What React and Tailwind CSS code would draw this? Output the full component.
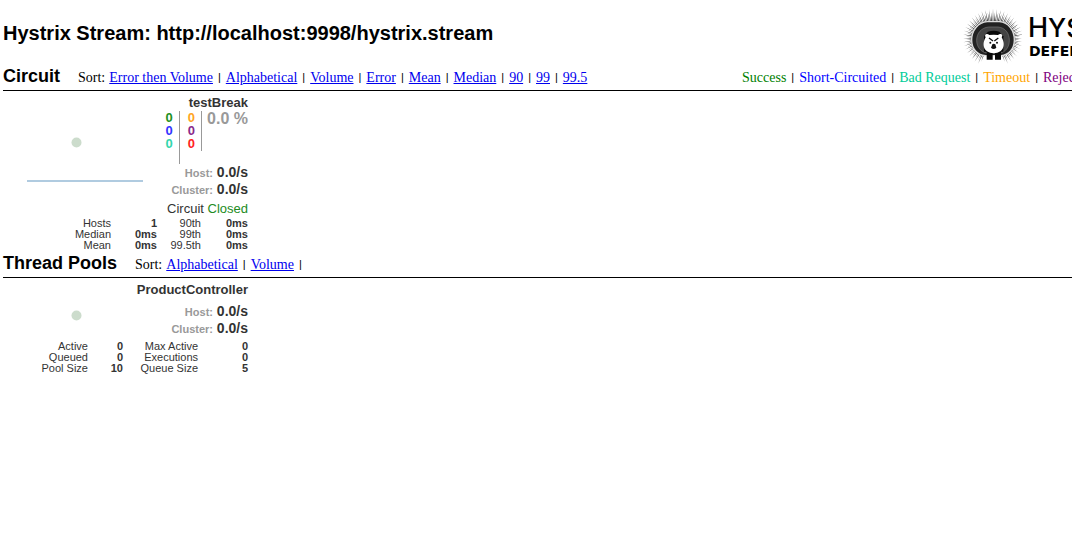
import React from "react";

const SANS = "font-['Liberation_Sans',Arial,sans-serif]";

const RAYS = Array.from({ length: 96 }, (_, i) => {
  const a = (i / 96) * Math.PI * 2;
  const w = 0.024;
  const rx = i % 2 ? 80 : 90;
  const ry = i % 2 ? 78 : 88;
  const p = (angle, x, y) =>
    `${(99 + Math.cos(angle) * x).toFixed(1)},${(100 + Math.sin(angle) * y).toFixed(1)}`;
  return { a, points: `${p(a - w, 58, 48)} ${p(a, rx, ry)} ${p(a + w, 58, 48)}` };
}).filter((r) => !(Math.sin(r.a) > 0.9));

function Logo() {
  return (
    <svg viewBox="0 0 186 180" className="h-[60px] w-[62px] shrink-0" aria-hidden="true">
      {RAYS.map((r) => (
        <polygon key={r.a} points={r.points} fill="#222" />
      ))}
      <path
        d="M82 50H118C146 52 163 77 163 105C163 132 146 150 123 152H77C52 150 35 132 35 105C35 77 54 52 82 50Z"
        fill="#222"
        stroke="#ddd"
        strokeWidth="4"
      />
      <path
        d="M86 66H114C136 68 148 85 148 106C148 127 136 141 121 144H79C64 141 50 127 50 106C50 85 64 68 86 66Z"
        fill="#444"
        stroke="#777"
        strokeWidth="2"
      />
      <path d="M84 80Q101 74 118 80L130 94V140H72V94Z" fill="#080808" />
      <path d="M80 138H98V164H80ZM105 138H123V164H105Z" fill="#080808" />
      <path
        d="M77 97C71 88 81 84 88 90Q101 88 114 90C121 84 131 88 125 97C134 112 134 130 121 139C110 147 92 147 81 139C68 130 68 112 77 97Z"
        fill="#fff"
      />
      <path d="M87 99L99 108M115 99L103 108" stroke="#111" strokeWidth="4" />
      <circle cx="91" cy="113" r="3" fill="#111" />
      <circle cx="111" cy="113" r="3" fill="#111" />
      <path d="M97 118Q101 115 106 118L109 128Q101 136 93 128Z" fill="#111" />
    </svg>
  );
}

function SortLinks({ items, trailing }) {
  return (
    <nav aria-label="Sort" className="flex gap-1 whitespace-nowrap font-['Liberation_Serif',serif] text-[14px] leading-4">
      <span>Sort:</span>
      {items.map((item, i) => (
        <React.Fragment key={item}>
          <a href="#" className="text-[#0000ee] underline">{item}</a>
          {(trailing || i < items.length - 1) && <Bar />}
        </React.Fragment>
      ))}
    </nav>
  );
}

function Bar() {
  return <span className="px-px font-['Liberation_Sans',sans-serif] text-[11px] leading-[15px]">|</span>;
}

function Legend() {
  const items = [
    ["Success", "text-[#008000]"],
    ["Short-Circuited", "text-[#0000ff]"],
    ["Bad Request", "text-[#00cc99]"],
    ["Timeout", "text-[#ffa500]"],
    ["Rejected", "text-[#800080]"],
  ];
  return (
    <div className="flex w-[330px] shrink-0 gap-1 overflow-hidden whitespace-nowrap font-['Liberation_Serif',serif] text-[14px] leading-4">
      {items.map(([label, color], i) => (
        <React.Fragment key={label}>
          {i > 0 && <Bar />}
          <span className={color}>{label}</span>
        </React.Fragment>
      ))}
    </div>
  );
}

function Rates() {
  return (
    <div className="text-right text-[14px] font-bold leading-[17px] text-[#333]">
      {["Host:", "Cluster:"].map((label) => (
        <div key={label}>
          <span className="text-[11px] leading-[11px] text-[#999]">{label}</span> 0.0/s
        </div>
      ))}
    </div>
  );
}

function Stats({ rows, columns }) {
  return (
    <table className="w-full table-fixed text-right text-[11px] leading-[11px]">
      <colgroup>
        {columns.map((c, i) => (
          <col key={i} className={c} />
        ))}
      </colgroup>
      <tbody>
        {rows.map(([a, av, b, bv]) => (
          <tr key={a}>
            <th scope="row" className="text-right font-normal">{a}</th>
            <td className="font-bold">{av}</td>
            <th scope="row" className="text-right font-normal">{b}</th>
            <td className="font-bold">{bv}</td>
          </tr>
        ))}
      </tbody>
    </table>
  );
}

export default function App() {
  return (
    <div className={`overflow-hidden bg-white pl-[3px] text-black ${SANS}`}>
      <header className="flex h-[66px] items-center justify-between">
        <h1 className="whitespace-nowrap text-[20px] font-bold leading-6">
          Hystrix Stream: http://localhost:9998/hystrix.stream
        </h1>
        <div className="flex w-[112px] shrink-0 items-center gap-[6px] overflow-hidden pt-1">
          <Logo />
          <div className="whitespace-nowrap pt-[6px]">
            <div className="font-['Inter',sans-serif] text-[27px] font-medium leading-[26px]">
              H<span className="text-[26px]">YSTRIX</span>
            </div>
            <div className="pl-px font-['DejaVu_Sans',sans-serif] text-[14px] font-bold leading-5">
              DEFEND YOUR APP
            </div>
          </div>
        </div>
      </header>

      <section>
        <div className="flex h-[25px] items-center justify-between border-b border-black">
          <div className="flex items-center gap-[18px]">
            <h2 className="pb-1 text-[18px] font-bold leading-5">Circuit</h2>
            <SortLinks
              items={["Error then Volume", "Alphabetical", "Volume", "Error", "Mean", "Median", "90", "99", "99.5"]}
            />
          </div>
          <Legend />
        </div>

        <article className="w-[245px] pt-1 text-[#333]">
          <h3 className="text-right text-[13px] font-bold leading-4">testBreak</h3>
          <div className="flex justify-between">
            <svg viewBox="0 0 140 76" className="h-[76px] w-[140px]" aria-hidden="true">
              <circle cx="73.5" cy="31.5" r="5" fill="#ccdccc" />
              <path d="M24 70H140" stroke="#b0cbe0" strokeWidth="2" />
            </svg>
            <div>
              <div className="flex justify-end text-[13px] font-bold leading-[13px]">
                <div className="h-[53px] border-r border-[#999] pr-[6px]">
                  <div className="text-[#229022]">0</div>
                  <div className="text-[#3333ff]">0</div>
                  <div className="text-[#33d6ad]">0</div>
                </div>
                <div className="h-10 border-r border-[#999] pl-2 pr-[6px]">
                  <div className="text-[#ffa522]">0</div>
                  <div className="text-[#8a2a8a]">0</div>
                  <div className="text-[#ff2222]">0</div>
                </div>
                <div className="pl-[5px] text-[16px] leading-4 text-[#999]">0.0 %</div>
              </div>
              <Rates />
            </div>
          </div>
          <div className="pb-px pt-[2px] text-right text-[13px] leading-[17px]">
            Circuit <span className="text-[#228b22]">Closed</span>
          </div>
          <Stats
            columns={["w-[108px]", "w-[46px]", "w-[44px]", "w-[47px]"]}
            rows={[
              ["Hosts", "1", "90th", "0ms"],
              ["Median", "0ms", "99th", "0ms"],
              ["Mean", "0ms", "99.5th", "0ms"],
            ]}
          />
        </article>
      </section>

      <section>
        <div className="flex h-[27px] items-center gap-[18px] border-b border-black pt-[2px]">
          <h2 className="whitespace-nowrap pb-1 text-[18px] font-bold leading-5">Thread Pools</h2>
          <SortLinks items={["Alphabetical", "Volume"]} trailing />
        </div>
        <article className="w-[245px] pt-1 text-[#333]">
          <h3 className="text-right text-[13px] font-bold leading-4">ProductController</h3>
          <div className="flex justify-between pb-1 pt-[5px]">
            <svg viewBox="0 0 140 34" className="h-[34px] w-[140px]" aria-hidden="true">
              <circle cx="73.5" cy="12.5" r="5" fill="#ccdccc" />
            </svg>
            <Rates />
          </div>
          <Stats
            columns={["w-[85px]", "w-[35px]", "w-[75px]", "w-[50px]"]}
            rows={[
              ["Active", "0", "Max Active", "0"],
              ["Queued", "0", "Executions", "0"],
              ["Pool Size", "10", "Queue Size", "5"],
            ]}
          />
        </article>
      </section>
    </div>
  );
}
